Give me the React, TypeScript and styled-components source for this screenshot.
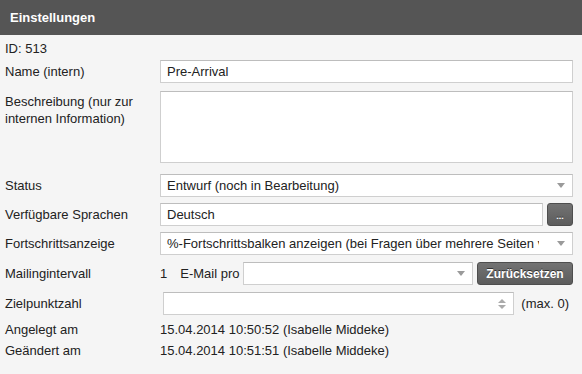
import React from 'react';
import styled, { createGlobalStyle } from 'styled-components';

const GlobalStyle = createGlobalStyle`
  html, body {
    margin: 0;
    padding: 0;
    background: #f5f5f5;
  }
  body {
    font-family: 'Liberation Sans', Arial, sans-serif;
    font-size: 13px;
    color: #222;
  }
`;

const Panel = styled.div`
  width: 582px;
  height: 374px;
  background: #f5f5f5;
  overflow: hidden;
`;

const Header = styled.div`
  height: 35px;
  background: #555555;
  color: #fff;
  font-weight: bold;
  font-size: 13px;
  display: flex;
  align-items: center;
  padding-left: 10px;
`;

const Body = styled.div`
  padding: 0 9px 0 5px;
`;

const Row = styled.div<{ $top: number; $h?: number; $alignTop?: boolean }>`
  display: flex;
  align-items: ${(p) => (p.$alignTop ? 'flex-start' : 'center')};
  margin-top: ${(p) => p.$top}px;
  height: ${(p) => (p.$h ? `${p.$h}px` : 'auto')};
`;

const Label = styled.div<{ $pad?: number }>`
  width: 155px;
  flex: none;
  line-height: 17px;
  padding-top: ${(p) => p.$pad ?? 0}px;
`;

const Value = styled.div`
  line-height: 17px;
  flex: 1;
`;

const Field = styled.div`
  flex: 1;
  display: flex;
  align-items: center;
  gap: 4px;
  min-width: 0;
`;

const TextInput = styled.div<{ $h?: number; $ml?: number }>`
  box-sizing: border-box;
  flex: 1;
  min-width: 0;
  height: ${(p) => p.$h ?? 23}px;
  margin-left: ${(p) => p.$ml ?? 0}px;
  background: #fff;
  border: 1px solid #cfcfcf;
  border-top-color: #bdbdbd;
  padding: 0 6px;
  display: flex;
  align-items: center;
  white-space: nowrap;
  overflow: hidden;
`;

const SelectText = styled.span`
  flex: 1;
  min-width: 0;
  overflow: hidden;
  white-space: nowrap;
  margin-right: 18px;
`;

const Arrow = styled.span`
  flex: none;
  width: 0;
  height: 0;
  border-left: 4px solid transparent;
  border-right: 4px solid transparent;
  border-top: 5px solid #9a9a9a;
  margin-right: 1px;
`;

const Spinner = styled.span`
  flex: none;
  display: flex;
  flex-direction: column;
  gap: 2px;
  margin-left: auto;
  margin-right: 1px;
  & > span {
    width: 0;
    height: 0;
    border-left: 4px solid transparent;
    border-right: 4px solid transparent;
  }
  & > span:first-child {
    border-bottom: 4px solid #aaa;
  }
  & > span:last-child {
    border-top: 4px solid #aaa;
  }
`;

const DarkButton = styled.button<{ $w?: number }>`
  flex: none;
  box-sizing: border-box;
  height: 23px;
  width: ${(p) => (p.$w ? `${p.$w}px` : 'auto')};
  padding: 0 6px;
  border: 1px solid #4e4e4e;
  border-radius: 3px;
  background: linear-gradient(#737373, #5c5c5c);
  color: #fff;
  font-family: 'Liberation Sans', Arial, sans-serif;
  font-size: 12px;
  font-weight: bold;
  text-shadow: 0 -1px 0 #333;
  display: flex;
  align-items: center;
  justify-content: center;
`;

const Dots = styled.span`
  font-size: 9px;
  line-height: 1;
  padding-top: 3px;
  letter-spacing: 0;
`;

const Inline = styled.span<{ $mr: number }>`
  margin-right: ${(p) => p.$mr}px;
  white-space: nowrap;
`;

export default function App() {
  return (
    <Panel>
      <GlobalStyle />
      <Header>Einstellungen</Header>
      <Body>
        <Row $top={5} $h={17}>
          <Value>ID: 513</Value>
        </Row>
        <Row $top={3}>
          <Label>Name (intern)</Label>
          <Field>
            <TextInput>Pre-Arrival</TextInput>
          </Field>
        </Row>
        <Row $top={8} $alignTop>
          <Label $pad={2}>
            Beschreibung (nur zur
            <br />
            internen Information)
          </Label>
          <Field>
            <TextInput $h={72} />
          </Field>
        </Row>
        <Row $top={11}>
          <Label>Status</Label>
          <Field>
            <TextInput>
              <SelectText>Entwurf (noch in Bearbeitung)</SelectText>
              <Arrow />
            </TextInput>
          </Field>
        </Row>
        <Row $top={6}>
          <Label>Verfügbare Sprachen</Label>
          <Field>
            <TextInput>Deutsch</TextInput>
            <DarkButton $w={26}>
              <Dots>...</Dots>
            </DarkButton>
          </Field>
        </Row>
        <Row $top={6}>
          <Label>Fortschrittsanzeige</Label>
          <Field>
            <TextInput>
              <SelectText>
                %-Fortschrittsbalken anzeigen (bei Fragen über mehrere Seiten verteilt)
              </SelectText>
              <Arrow />
            </TextInput>
          </Field>
        </Row>
        <Row $top={7}>
          <Label>Mailingintervall</Label>
          <Field>
            <Inline $mr={9}>1</Inline>
            <Inline $mr={0}>E-Mail pro</Inline>
            <TextInput>
              <SelectText />
              <Arrow />
            </TextInput>
            <DarkButton $w={96}>Zurücksetzen</DarkButton>
          </Field>
        </Row>
        <Row $top={7}>
          <Label>Zielpunktzahl</Label>
          <Field>
            <TextInput $ml={3}>
              <Spinner>
                <span />
                <span />
              </Spinner>
            </TextInput>
            <Inline $mr={4}>&nbsp;(max. 0)</Inline>
          </Field>
        </Row>
        <Row $top={6} $h={17}>
          <Label>Angelegt am</Label>
          <Value>15.04.2014 10:50:52 (Isabelle Middeke)</Value>
        </Row>
        <Row $top={4} $h={17}>
          <Label>Geändert am</Label>
          <Value>15.04.2014 10:51:51 (Isabelle Middeke)</Value>
        </Row>
      </Body>
    </Panel>
  );
}
